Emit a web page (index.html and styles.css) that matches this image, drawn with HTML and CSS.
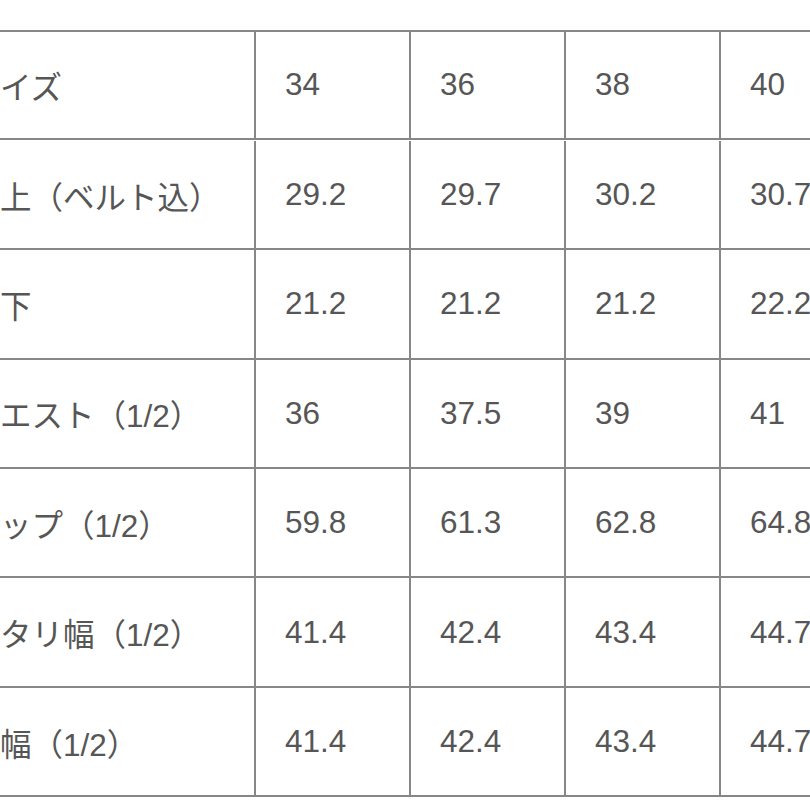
FILE: index.html
```html
<!DOCTYPE html>
<html lang="ja">
<head>
<meta charset="utf-8">
<title>サイズ表</title>
<link rel="stylesheet" href="styles.css">
</head>
<body>
<div class="page">
  <div class="size-table">
    <div class="cell label">サイズ</div><div class="cell">34</div><div class="cell">36</div><div class="cell">38</div><div class="cell">40</div>
    <div class="cell label">股上（ベルト込）</div><div class="cell">29.2</div><div class="cell">29.7</div><div class="cell">30.2</div><div class="cell">30.7</div>
    <div class="cell label">股下</div><div class="cell">21.2</div><div class="cell">21.2</div><div class="cell">21.2</div><div class="cell">22.2</div>
    <div class="cell label">ウエスト（1/2）</div><div class="cell">36</div><div class="cell">37.5</div><div class="cell">39</div><div class="cell">41</div>
    <div class="cell label">ヒップ（1/2）</div><div class="cell">59.8</div><div class="cell">61.3</div><div class="cell">62.8</div><div class="cell">64.8</div>
    <div class="cell label">ワタリ幅（1/2）</div><div class="cell">41.4</div><div class="cell">42.4</div><div class="cell">43.4</div><div class="cell">44.7</div>
    <div class="cell label">裾幅（1/2）</div><div class="cell">41.4</div><div class="cell">42.4</div><div class="cell">43.4</div><div class="cell">44.7</div>
  </div>
</div>
</body>
</html>
```

FILE: styles.css
```css
html, body {
  margin: 0;
  padding: 0;
  background: #ffffff;
  width: 810px;
  height: 810px;
  overflow: hidden;
}

.page {
  padding-top: 29.5px;
  margin-left: -60.5px;
  width: 1000px;
}

.size-table {
  display: grid;
  grid-template-columns: 316.5px repeat(4, 155px);
  grid-auto-rows: 109.4px;
  border-top: 2px solid #878787;
  width: max-content;
  font-family: "Liberation Sans", "Noto Sans CJK JP", sans-serif;
  font-size: 31.5px;
  color: #565656;
}

.size-table > .cell:nth-child(-n+5) {
  height: 108.8px;
}

.cell {
  box-sizing: border-box;
  display: flex;
  align-items: center;
  padding-left: 29px;
  border-right: 2px solid #878787;
  border-bottom: 2px solid #878787;
  white-space: nowrap;
}

.label {
  padding-left: 29px;
}
```
